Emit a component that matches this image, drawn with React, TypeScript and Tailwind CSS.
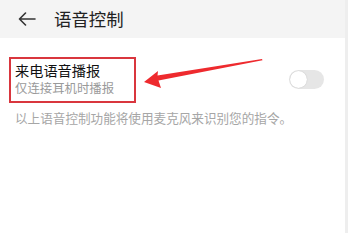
import React from "react";

export default function App() {
  const font = { fontFamily: '"Noto Sans CJK SC", "Noto Sans", sans-serif' };
  return (
    <div className="relative w-[348px] h-[233px] bg-white flex overflow-hidden" style={font}>
      <div className="flex-1 flex flex-col">
        <div className="h-[38px] bg-[#f4f4f4] flex items-center pl-[18px]">
          <svg width="18" height="14" viewBox="0 0 18 14" fill="none" stroke="#333" strokeWidth="1.6" strokeLinecap="round" strokeLinejoin="round">
            <path d="M17 7H1.5M7.5 1L1.5 7l6 6" />
          </svg>
          <span className="ml-[18px] text-[17.4px] leading-[22px] text-[#222]">语音控制</span>
        </div>
        <div className="flex items-center pl-[15px] pr-[21px] pt-[23px]">
          <div className="flex-1 flex flex-col">
            <span className="text-[14.2px] leading-[18px] text-[#111]">来电语音播报</span>
            <span className="text-[12.4px] leading-[18px] text-[#9a9a9a]">仅连接耳机时播报</span>
          </div>
          <div className="w-[35px] h-[19px] rounded-full bg-[#e6e6e6] flex items-center pl-[1px]">
            <div className="w-[17px] h-[17px] rounded-full bg-white shadow-[0_0_1px_rgba(0,0,0,0.25)]" />
          </div>
        </div>
        <div className="pl-[15px] pt-[12px] text-[12.6px] leading-[17px] text-[#a6a6a6]">
          以上语音控制功能将使用麦克风来识别您的指令。
        </div>
      </div>
      <div className="w-[3px] bg-[#eeeeee]" />
      <div className="absolute left-[9px] top-[57px] w-[127px] h-[46px] border-[2.5px] border-[#d9363e]" />
      <svg className="absolute left-0 top-0" width="348" height="233" viewBox="0 0 348 233">
        <polygon points="144,82 158,71 157.5,75.5 262,59 262.5,60.2 158.5,80.5 161,88" fill="#ee2a2e" />
      </svg>
    </div>
  );
}
